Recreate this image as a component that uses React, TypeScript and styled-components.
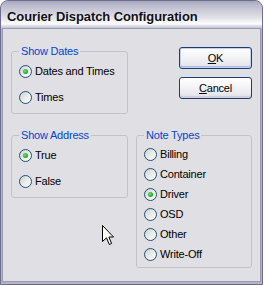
import React from 'react'
import styled, { createGlobalStyle } from 'styled-components'

const GlobalStyle = createGlobalStyle`
    html, body {
        margin: 0;
        padding: 0;
        background: #ffffff;
    }
    body {
        font-family: "Liberation Sans", Arial, sans-serif;
        font-size: 11px;
        letter-spacing: -0.2px;
        color: #000000;
    }
`

const Window = styled.div`
    width: 263px;
    height: 285px;
    box-sizing: border-box;
    border: 1px solid #6e6e8c;
    border-radius: 8px 8px 0 0;
    overflow: hidden;
    display: flex;
    flex-direction: column;
    background: #b4b4c8;
`

const TitleBar = styled.div`
    height: 28px;
    flex-shrink: 0;
    display: flex;
    align-items: center;
    padding: 2px 0 0 6px;
    box-sizing: border-box;
    background: linear-gradient(
        to bottom,
        #a4a4bc 0px,
        #b6b6ca 3px,
        #cdcdda 10px,
        #e2e2ea 17px,
        #f6f6f9 21px,
        #ffffff 23px,
        #dadae4 25px,
        #bcbccf 28px
    );
`

const Title = styled.span`
    font-family: "Liberation Sans", Arial, sans-serif;
    font-weight: bold;
    font-size: 13px;
    color: #101018;
    text-shadow: 1px 1px 0 rgba(255, 255, 255, 0.6);
    letter-spacing: -0.1px;
`

const Frame = styled.div`
    flex: 1;
    display: flex;
    padding: 0 2px 3px 2px;
`

const Client = styled.div`
    position: relative;
    flex: 1;
    background: #e0dfe3;
    box-shadow: 0 0 0 1px #9a9ab2;
    display: grid;
    grid-template-columns: 117px 116px;
    column-gap: 8px;
    row-gap: 15px;
    align-content: start;
    align-items: start;
    padding: 16px 7px 0 8px;
`

const Group = styled.fieldset<{ $top?: number }>`
    align-self: start;
    margin: 0;
    padding: ${(p) => p.$top ?? 0}px 6px 3px 7px;
    border: 1px solid #c2c2c9;
    border-radius: 3px;
    min-width: 0;
`

const Legend = styled.legend`
    padding: 0 2px;
    font-size: 11px;
    line-height: 13px;
    color: #0046d5;
`

const Option = styled.label<{ $h: number }>`
    display: flex;
    align-items: center;
    height: ${(p) => p.$h}px;
    line-height: 13px;
`

const RadioMark = styled.span<{ $checked?: boolean }>`
    position: relative;
    width: 13px;
    height: 13px;
    box-sizing: border-box;
    border-radius: 50%;
    border: 1px solid #1c5180;
    background: linear-gradient(135deg, #d0d0ca 0%, #e8e8e4 45%, #ffffff 100%);
    margin-right: 3px;
    flex-shrink: 0;

    &::after {
        content: '';
        display: ${(p) => (p.$checked ? 'block' : 'none')};
        position: absolute;
        left: 3px;
        top: 3px;
        width: 5px;
        height: 5px;
        border-radius: 50%;
        background: radial-gradient(circle at 40% 40%, #6ee36e 0%, #2cb12c 55%, #188a18 100%);
    }
`

const ButtonStack = styled.div`
    justify-self: end;
    margin-top: 2px;
    display: flex;
    flex-direction: column;
    gap: 8px;
`

const Button = styled.button<{ $default?: boolean }>`
    width: 73px;
    height: 22px;
    box-sizing: border-box;
    padding: 0;
    border: 1px solid #1c3f6e;
    border-radius: 3px;
    font-family: "Liberation Sans", Arial, sans-serif;
    font-size: 11px;
    letter-spacing: -0.2px;
    color: #000000;
    background: linear-gradient(to bottom, #ffffff 0%, #f6f6f8 40%, #e6e6ec 85%, #d6d6e0 100%);
    box-shadow: ${(p) =>
        p.$default
            ? 'inset 0 0 0 1px #c4d2ee, inset 0 -1px 0 1px #a9bde6'
            : 'inset 0 -2px 0 #cfcfda'};

    u {
        text-decoration: underline;
        text-underline-offset: 1px;
    }
`

const Cursor = styled.svg`
    position: absolute;
    left: 99px;
    top: 196px;
`

type RadioItem = { label: string; checked?: boolean }

const RadioList = ({ items, rowHeight }: { items: RadioItem[]; rowHeight: number }) => (
    <>
        {items.map((item) => (
            <Option key={item.label} $h={rowHeight}>
                <RadioMark $checked={item.checked} />
                {item.label}
            </Option>
        ))}
    </>
)

const noteTypes: RadioItem[] = [
    { label: 'Billing' },
    { label: 'Container' },
    { label: 'Driver', checked: true },
    { label: 'OSD' },
    { label: 'Other' },
    { label: 'Write-Off' },
]

const App: React.FC = () => {
    return (
        <>
            <GlobalStyle />
            <Window>
                <TitleBar>
                    <Title>Courier Dispatch Configuration</Title>
                </TitleBar>
                <Frame>
                    <Client>
                        <Group>
                            <Legend>Show Dates</Legend>
                            <RadioList
                                rowHeight={26}
                                items={[{ label: 'Dates and Times', checked: true }, { label: 'Times' }]}
                            />
                        </Group>

                        <ButtonStack>
                            <Button $default>
                                <u>O</u>K
                            </Button>
                            <Button>
                                <u>C</u>ancel
                            </Button>
                        </ButtonStack>

                        <Group>
                            <Legend>Show Address</Legend>
                            <RadioList
                                rowHeight={26}
                                items={[{ label: 'True', checked: true }, { label: 'False' }]}
                            />
                        </Group>

                        <Group $top={2}>
                            <Legend>Note Types</Legend>
                            <RadioList rowHeight={20} items={noteTypes} />
                        </Group>

                        <Cursor width="13" height="21" viewBox="0 0 13 21">
                            <path
                                d="M0.5 0.5 L0.5 16.5 L4.5 12.8 L7.3 19.5 L9.6 18.5 L6.9 12 L11.5 12 Z"
                                fill="#ffffff"
                                stroke="#000000"
                                strokeWidth="1"
                                strokeLinejoin="miter"
                            />
                        </Cursor>
                    </Client>
                </Frame>
            </Window>
        </>
    )
}

export default App
